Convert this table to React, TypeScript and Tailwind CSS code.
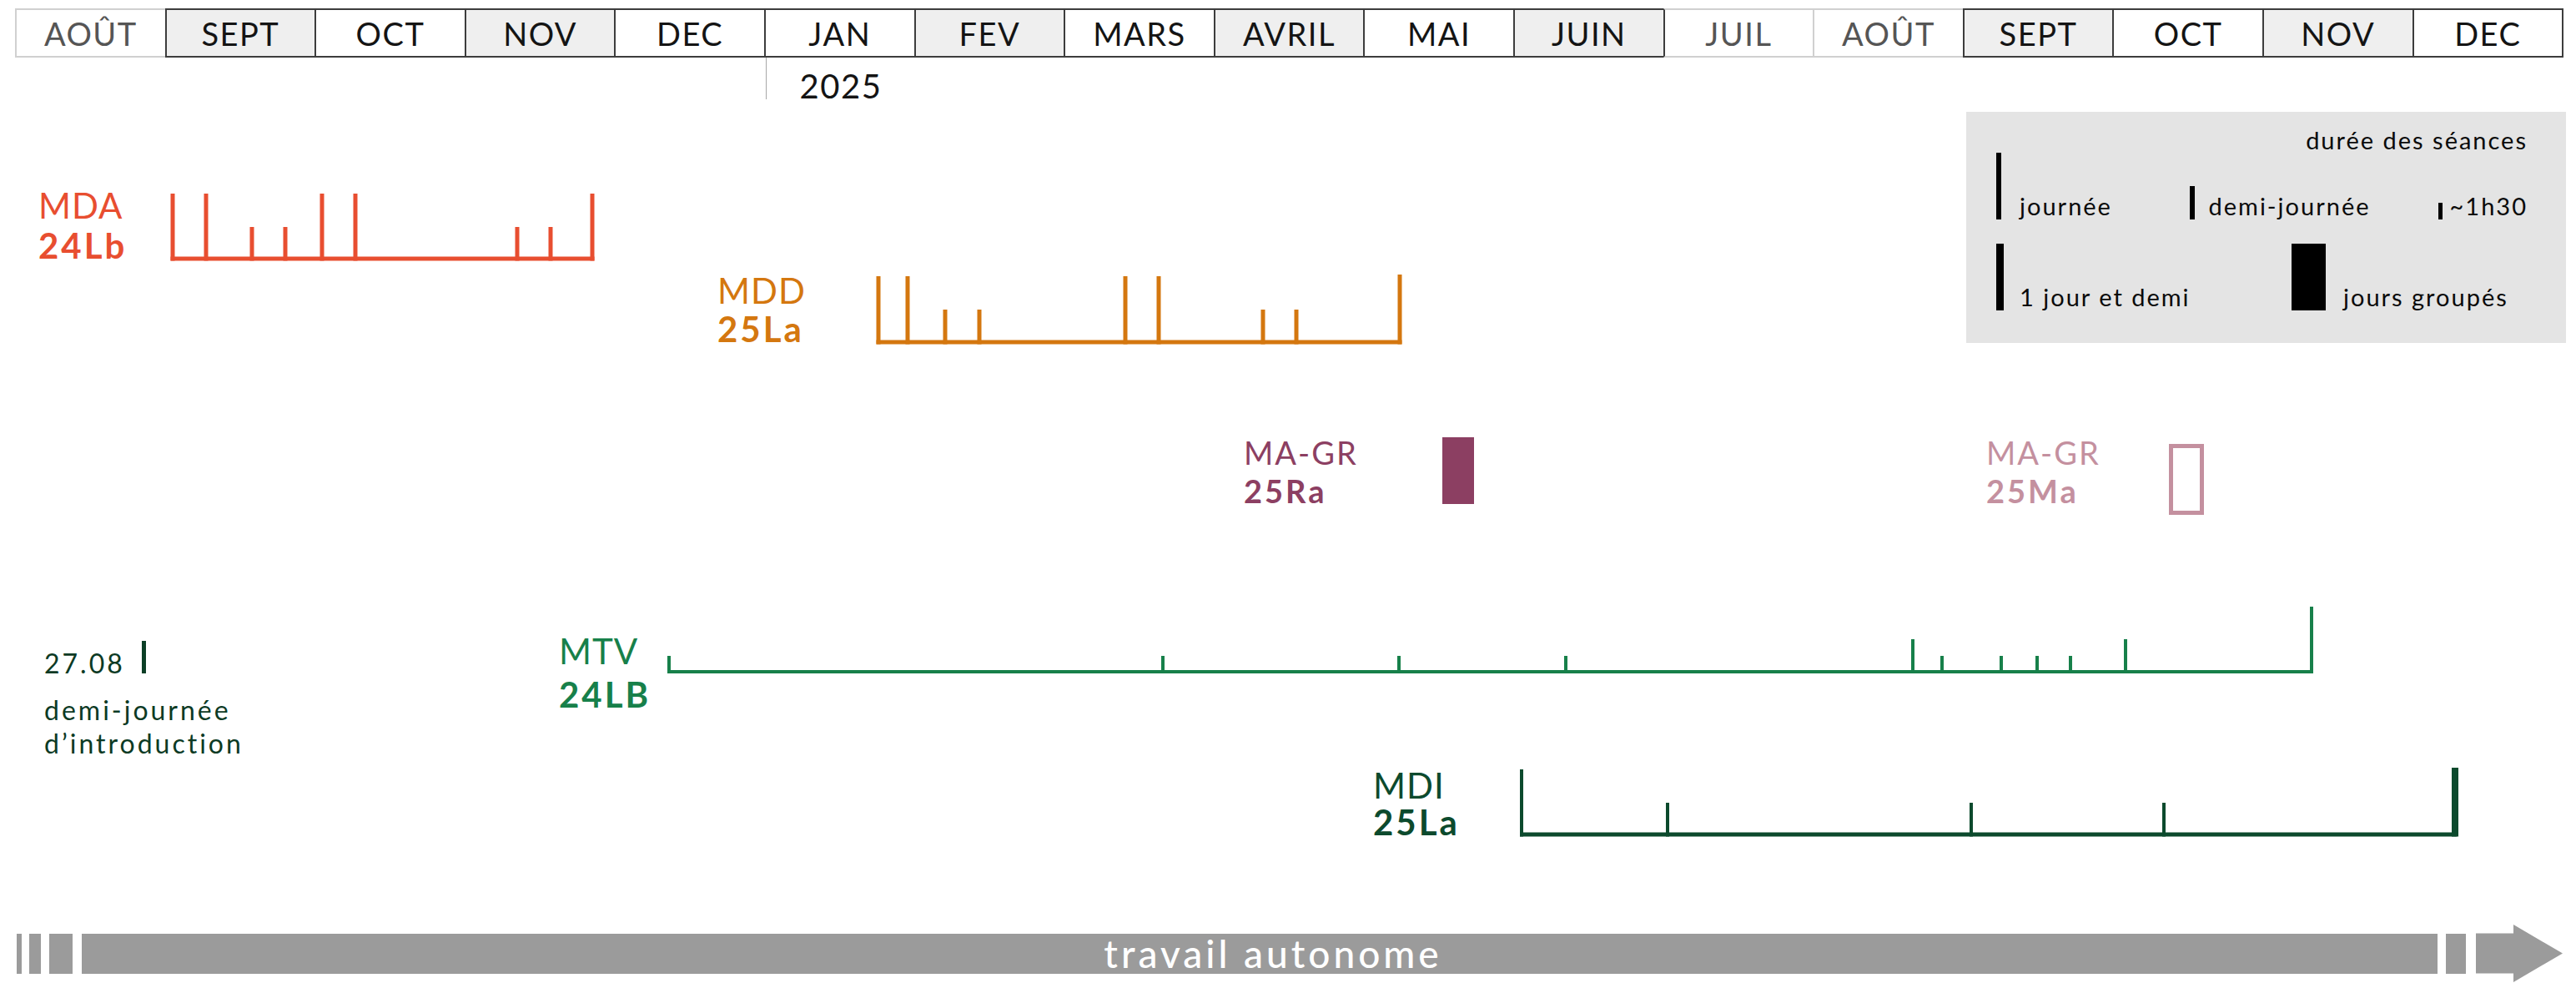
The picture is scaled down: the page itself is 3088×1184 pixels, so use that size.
import React from "react";

const months = [
  { label: "AOÛT", shade: false, dim: true },
  { label: "SEPT", shade: true, dim: false },
  { label: "OCT", shade: false, dim: false },
  { label: "NOV", shade: true, dim: false },
  { label: "DEC", shade: false, dim: false },
  { label: "JAN", shade: false, dim: false },
  { label: "FEV", shade: true, dim: false },
  { label: "MARS", shade: false, dim: false },
  { label: "AVRIL", shade: true, dim: false },
  { label: "MAI", shade: false, dim: false },
  { label: "JUIN", shade: true, dim: false },
  { label: "JUIL", shade: false, dim: true },
  { label: "AOÛT", shade: false, dim: true },
  { label: "SEPT", shade: true, dim: false },
  { label: "OCT", shade: false, dim: false },
  { label: "NOV", shade: true, dim: false },
  { label: "DEC", shade: false, dim: false },
];

// x, top of the tick, optional width
type Tick = [number, number, number?];

const tracks: { color: string; y: number; x0: number; x1: number; h: number; w: number; ticks: Tick[] }[] = [
  {
    color: "#e84e30", y: 310, x0: 207, x1: 710, h: 5, w: 5,
    ticks: [[207, 232], [247, 232], [302, 272], [342, 272], [386, 232], [426, 232], [620, 272], [660, 272], [710, 232]],
  },
  {
    color: "#d4770f", y: 410, x0: 1053, x1: 1678, h: 5, w: 5,
    ticks: [[1053, 331], [1088, 331], [1133, 371], [1174, 371], [1349, 331], [1389, 331], [1514, 371], [1554, 371], [1678, 329]],
  },
  {
    color: "#17804a", y: 805, x0: 802, x1: 2771, h: 4, w: 4,
    ticks: [[802, 786], [1394, 786], [1677, 786], [1877, 786], [2293, 766], [2328, 786], [2399, 786], [2442, 786], [2482, 786], [2548, 766], [2771, 727]],
  },
  {
    color: "#0c4a2d", y: 1000, x0: 1824, x1: 2943, h: 5, w: 4,
    ticks: [[1824, 922], [1999, 962], [2363, 962], [2594, 962], [2943, 920, 8]],
  },
];

function MonthRow() {
  return (
    <div className="pt-[10px] pl-[18px]">
      <div className="flex w-[3055px] h-[59px]">
        {months.map((m, i) => {
          const prevDim = i > 0 ? months[i - 1].dim : true;
          const leftDark = !m.dim || !prevDim;
          return (
            <div
              key={i}
              className={`flex-1 flex items-center justify-center border-t-2 border-b-2 border-l-2 text-[38px] font-normal tracking-[1.5px] leading-none ${
                m.shade ? "bg-[#efefef]" : "bg-white"
              } ${m.dim ? "border-t-[#d0d0d0] border-b-[#d0d0d0] text-[#555555]" : "border-t-[#3d3d3d] border-b-[#3d3d3d] text-[#141414]"} ${
                leftDark ? "border-l-[#3d3d3d]" : "border-l-[#d0d0d0]"
              } ${i === months.length - 1 ? "border-r-2 border-r-[#3d3d3d]" : ""}`}
            >
              {m.label}
            </div>
          );
        })}
      </div>
    </div>
  );
}

function Legend() {
  return (
    <div className="absolute left-[2357px] top-[65px] w-[719px] h-[277px] bg-[#e4e4e4] pt-[19px] pl-[36px] pr-[46px] text-[#0a0a0a] text-[29px] font-normal tracking-[2px]">
      <div className="text-right leading-none h-[29px]">durée des séances</div>
      <div className="flex items-end h-[80px] mt-[1px]">
        <div className="flex items-end w-[234px]">
          <div className="w-[6px] h-[80px] bg-black" />
          <span className="ml-[22px] leading-none mb-[2px]">journée</span>
        </div>
        <div className="flex items-end w-[299px]">
          <div className="w-[6px] h-[40px] bg-black" />
          <span className="ml-[16px] leading-none mb-[2px]">demi-journée</span>
        </div>
        <div className="flex items-end">
          <div className="w-[5px] h-[20px] bg-black" />
          <span className="ml-[9px] leading-none mb-[2px]">~1h30</span>
        </div>
      </div>
      <div className="flex items-end h-[80px] mt-[29px]">
        <div className="flex items-end w-[354px]">
          <div className="w-[9px] h-[80px] bg-black" />
          <span className="ml-[19px] leading-none mb-[2px]">1 jour et demi</span>
        </div>
        <div className="flex items-end">
          <div className="w-[41px] h-[80px] bg-black" />
          <span className="ml-[21px] leading-none mb-[2px]">jours groupés</span>
        </div>
      </div>
    </div>
  );
}

function Tracks() {
  return (
    <svg className="absolute left-0 top-0" width={3088} height={1036} viewBox="0 69 3088 1036">
      {tracks.map((t, i) => (
        <g key={i} fill={t.color}>
          <rect x={t.x0 - t.w / 2} y={t.y - t.h / 2} width={t.x1 - t.x0 + t.w} height={t.h} />
          {t.ticks.map(([x, top, w], j) => {
            const tw = w ?? t.w;
            return <rect key={j} x={x - tw / 2} y={top} width={tw} height={t.y + t.h / 2 - top} />;
          })}
        </g>
      ))}
      {/* MA-GR blocs */}
      <rect x={1729} y={524} width={38} height={80} fill="#8c3f62" />
      <rect x={2602.5} y={534.5} width={37} height={80} fill="none" stroke="#c4909f" strokeWidth={5} />
      {/* 27.08 */}
      <rect x={170} y={768} width={5} height={39} fill="#0c3f26" />
    </svg>
  );
}

export default function App() {
  return (
    <div className="w-[3088px] h-[1184px] bg-white overflow-hidden font-['Lato',sans-serif]">
      <MonthRow />

      <div className="relative h-[1036px]">
        <div className="absolute left-[918px] top-0 w-px h-[50px] bg-[#a8a8a8]" />
        <div className="absolute left-[918px] top-[14px] w-[180px] text-center text-[40px] font-normal tracking-[1.5px] leading-none text-[#141414]">
          2025
        </div>

        <Tracks />

        <div className="absolute left-[46px] top-[153px] text-[42px] leading-[48px] tracking-[1px] text-[#e84e30]">
          <div>MDA</div>
          <div className="font-bold tracking-[3px]">24Lb</div>
        </div>
        <div className="absolute left-[860px] top-[256px] text-[42px] leading-[46px] tracking-[1px] text-[#d4770f]">
          <div>MDD</div>
          <div className="font-bold tracking-[3px]">25La</div>
        </div>
        <div className="absolute left-[1491px] top-[450px] text-[38px] leading-[46px] tracking-[2px] text-[#8c3f62]">
          <div>MA-GR</div>
          <div className="font-bold tracking-[3px]">25Ra</div>
        </div>
        <div className="absolute left-[2381px] top-[450px] text-[38px] leading-[46px] tracking-[2px] text-[#c4909f]">
          <div>MA-GR</div>
          <div className="font-bold tracking-[3px]">25Ma</div>
        </div>
        <div className="absolute left-[670px] top-[685px] text-[42px] leading-[52px] tracking-[1px] text-[#17804a]">
          <div>MTV</div>
          <div className="font-bold tracking-[3px]">24LB</div>
        </div>
        <div className="absolute left-[1646px] top-[850px] text-[42px] leading-[44px] tracking-[1px] text-[#0c4a2d]">
          <div>MDI</div>
          <div className="font-bold tracking-[3px]">25La</div>
        </div>

        <div className="absolute left-[53px] top-[706px] text-[32px] leading-[40px] font-normal tracking-[3px] text-[#0c3a24]">
          <div>27.08</div>
          <div className="mt-[16px]">demi-journée</div>
          <div>d’introduction</div>
        </div>

        <Legend />
      </div>

      <div className="flex items-center h-[75px] pl-[20px]">
        <div className="w-[6px] h-[48px] bg-[#9b9b9b]" />
        <div className="ml-[9px] w-[14px] h-[48px] bg-[#9b9b9b]" />
        <div className="ml-[10px] w-[28px] h-[48px] bg-[#9b9b9b]" />
        <div className="ml-[11px] w-[2824px] h-[48px] bg-[#9b9b9b] flex items-center justify-center pl-[32px] text-white text-[46px] font-medium tracking-[4px] leading-none">
          travail autonome
        </div>
        <div className="ml-[10px] w-[24px] h-[48px] bg-[#9b9b9b]" />
        <svg className="ml-[12px]" width={104} height={75} viewBox="0 0 104 75">
          <polygon points="0,13.5 45,13.5 45,3 104,37.5 45,72 45,61.5 0,61.5" fill="#9b9b9b" />
        </svg>
      </div>
    </div>
  );
}
